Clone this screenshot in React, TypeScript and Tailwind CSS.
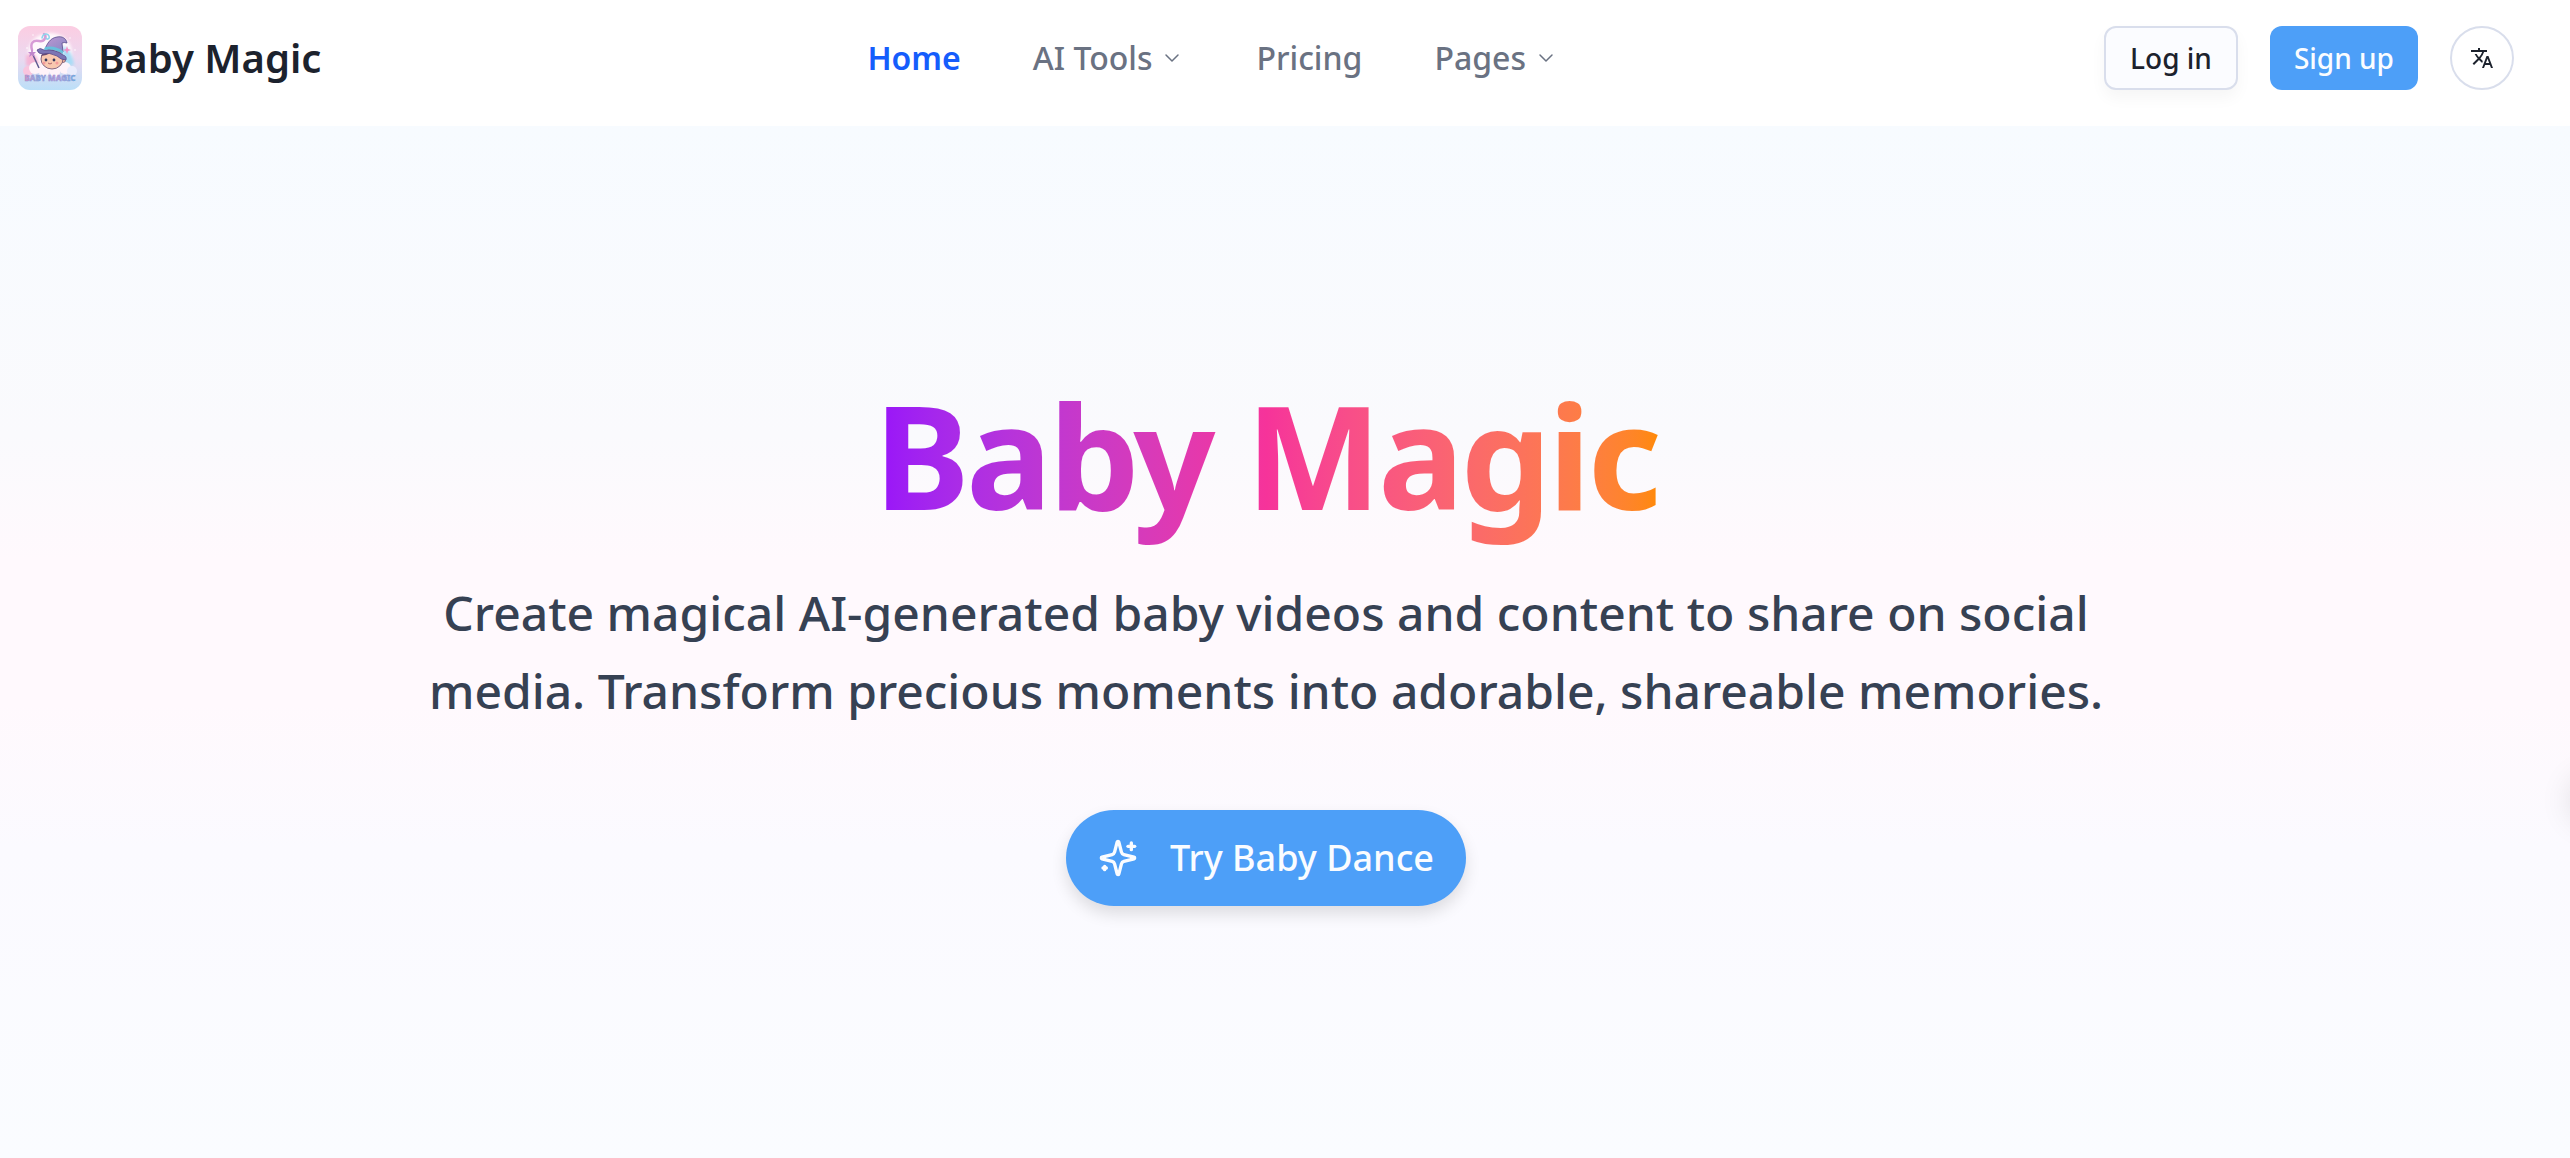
import { ChevronDown } from "lucide-react";
import { MdTranslate } from "react-icons/md";

const navItems = [
  { label: "Home", active: true },
  { label: "AI Tools", menu: true },
  { label: "Pricing" },
  { label: "Pages", menu: true },
];

const SparklesIcon = () => (
  <svg
    viewBox="0 0 24 24"
    fill="none"
    stroke="currentColor"
    strokeWidth="2"
    strokeLinecap="round"
    strokeLinejoin="round"
    className="size-10"
    aria-hidden="true"
  >
    <path d="M9.937 15.5A2 2 0 0 0 8.5 14.063l-6.135-1.582a.5.5 0 0 1 0-.962L8.5 9.936A2 2 0 0 0 9.937 8.5l1.582-6.135a.5.5 0 0 1 .963 0L14.063 8.5A2 2 0 0 0 15.5 9.937l6.135 1.581a.5.5 0 0 1 0 .964L15.5 14.063a2 2 0 0 0-1.437 1.437l-1.582 6.135a.5.5 0 0 1-.963 0z" />
    <path d="M20 3v4" />
    <path d="M22 5h-4" />
    <path d="M4 17v2" />
    <path d="M5 18H3" />
  </svg>
);

const Logo = () => (
  <svg viewBox="0 0 64 64" className="size-16 rounded-xl" aria-hidden="true">
    <defs>
      <linearGradient id="sky" x1="0" y1="0" x2="0" y2="1">
        <stop offset="0" stopColor="#fccde2" />
        <stop offset="0.5" stopColor="#ecd9f0" />
        <stop offset="1" stopColor="#bbdff8" />
      </linearGradient>
      <linearGradient id="hat" x1="0" y1="0" x2="1" y2="1">
        <stop offset="0" stopColor="#bf97d2" />
        <stop offset="1" stopColor="#8487c4" />
      </linearGradient>
      <linearGradient id="word" x1="0" y1="0" x2="1" y2="0">
        <stop offset="0" stopColor="#e48cc0" />
        <stop offset="0.3" stopColor="#86b4e4" />
        <stop offset="0.6" stopColor="#cf9ad8" />
        <stop offset="1" stopColor="#62bbe8" />
      </linearGradient>
      <filter id="soft">
        <feGaussianBlur stdDeviation="1.5" />
      </filter>
    </defs>
    <rect width="64" height="64" fill="url(#sky)" />
    {/* glow and clouds */}
    <ellipse cx="32" cy="27" rx="22" ry="20" fill="#fff8fc" filter="url(#soft)" />
    <path d="M44 20q10 3 12 19l-10 2z" fill="#a9dcf6" filter="url(#soft)" />
    <path d="M8 30q4-5 10 0l4 10H8z" fill="#f5b6d6" filter="url(#soft)" />
    <g fill="#fff3f9">
      <circle cx="10" cy="45" r="5" fill="#f9c5de" />
      <circle cx="17" cy="42" r="6" />
      <circle cx="26" cy="46" r="5" />
      <circle cx="37" cy="46" r="5" />
      <circle cx="47" cy="42" r="6" />
      <circle cx="54" cy="45" r="5" fill="#e9ecfc" />
    </g>
    {/* wand and its trail */}
    <path d="M14 24c-2-7 1-10 7-9s8-5 5-7" fill="none" stroke="#d79bd6" strokeWidth="2.5" strokeLinecap="round" />
    <path d="M24 12c1-5 6-5 7-2s-2 4-3 2" fill="none" stroke="#8ed4ec" strokeWidth="1.5" strokeLinecap="round" />
    <path d="M15 29l6 13" stroke="#605a91" strokeWidth="1.5" />
    <path d="M14 23l1 3 3 0-2 2 1 3-3-2-3 2 1-3-2-2 3 0z" fill="#c087cc" />
    {/* baby */}
    <circle cx="45" cy="34" r="2.5" fill="#f3b69f" stroke="#67486a" strokeWidth="0.7" />
    <ellipse cx="34" cy="33" rx="11" ry="10" fill="#f9c8af" stroke="#67486a" strokeWidth="0.8" />
    <path d="M23 30q3-6 10-6t11 6q-5-1-8-3-2 2-4 0-4 3-9 3z" fill="#67486a" />
    <circle cx="28" cy="34" r="1.4" fill="#34385d" />
    <circle cx="36" cy="34" r="1.4" fill="#34385d" />
    <circle cx="26" cy="37" r="1.5" fill="#f49a9a" />
    <circle cx="39" cy="37" r="1.5" fill="#f49a9a" />
    <path d="M30 37q2 2 4 0" fill="none" stroke="#9b4c5c" strokeWidth="0.8" />
    {/* hat */}
    <path d="M27 23c2-5 5-11 12-12 5-1 9 1 10 6q-3-1-5 0l1 9q-9-5-18-3z" fill="url(#hat)" stroke="#594b8b" strokeWidth="0.8" />
    <path d="M19 24q3-3 7 0 12-1 19 5 4 1 3 5-5 0-9-4-8-4-14-2-5 0-6-4z" fill="#7b75b4" stroke="#594b8b" strokeWidth="0.8" />
    <path d="M27 21q10-2 18 4v3q-9-6-19-4z" fill="#68c0dc" />
    <path d="M49 20l1 3 3 1-3 1-1 3-1-3-3-1 3-1z" fill="#f58ec4" />
    <g fill="#ffffff">
      <circle cx="9" cy="22" r="0.8" />
      <circle cx="57" cy="24" r="0.8" />
      <circle cx="52" cy="12" r="0.7" />
      <circle cx="15" cy="9" r="0.7" />
    </g>
    <text
      x="32"
      y="55"
      textAnchor="middle"
      fill="url(#word)"
      stroke="#8a8fd0"
      strokeWidth="0.4"
      className="font-['Noto_Sans',sans-serif] text-[8px] font-extrabold"
    >
      BABY MAGIC
    </text>
  </svg>
);

const Header = () => (
  <header className="bg-white">
    <div className="flex items-center justify-between pt-[26px] pr-14 pb-9 pl-[18px]">
      <a href="#" className="flex items-center gap-4 text-[40px] leading-16 font-semibold text-[#1c222d]">
        <Logo />
        Baby Magic
      </a>
      <nav className="flex items-center gap-[72px] text-[32px] leading-16 font-medium text-gray-500">
        {navItems.map((item) =>
          item.menu ? (
            <button key={item.label} type="button" className="flex items-center gap-2">
              {item.label}
              <ChevronDown className="size-6" strokeWidth={1.5} />
            </button>
          ) : (
            <a
              key={item.label}
              href="#"
              className={item.active ? "font-semibold text-[#155dfc]" : ""}
            >
              {item.label}
            </a>
          ),
        )}
      </nav>
      <div className="flex items-center gap-8 text-[28px] font-medium">
        <button
          type="button"
          className="h-16 rounded-xl border-2 border-[#d9deec] bg-[#fbfcff] px-6 text-[#1c222d] shadow-[0_8px_16px_rgba(0,0,0,0.04)]"
        >
          Log in
        </button>
        <button type="button" className="h-16 rounded-xl bg-[#4d9ff8] px-6 text-[#fafcff]">
          Sign up
        </button>
        <button
          type="button"
          aria-label="Change language"
          className="flex size-16 items-center justify-center rounded-full border-2 border-[#d9deec] text-[#1c222d]"
        >
          <MdTranslate className="size-6" />
        </button>
      </div>
    </div>
  </header>
);

const Hero = () => (
  <main className="flex grow flex-col items-center bg-[linear-gradient(to_bottom,#f7fbff,#fafafd_30%,#fff9fd_42%,#fff9fd_56%,#fbfaff_70%,#fafcff)] pt-[238px] pr-[38px] text-center">
    <h1 className="bg-linear-to-r from-[#9810fa] via-[#f6339a] to-[#ff8904] bg-clip-text pb-4 text-[144px] leading-[180px] font-bold tracking-tight text-transparent">
      Baby Magic
    </h1>
    <p className="mt-[14px] max-w-[1792px] text-5xl leading-[78px] font-medium text-[#364153]">
      Create magical AI-generated baby videos and content to share on social media. Transform
      precious moments into adorable, shareable memories.
    </p>
    <button
      type="button"
      className="mt-20 flex h-24 items-center gap-8 rounded-full bg-[#4d9ff8] px-8 text-4xl font-medium text-[#fafcff] shadow-[0_8px_16px_rgba(0,0,0,0.12)]"
    >
      <SparklesIcon />
      Try Baby Dance
    </button>
  </main>
);

export default function App() {
  return (
    <div className="flex min-h-screen flex-col font-['Noto_Sans',sans-serif]">
      <Header />
      <Hero />
      {/* side drawer handle, tucked away past the right edge */}
      <div className="fixed top-[67%] -right-12 size-12 rounded-full bg-white shadow-[0_0_32px_rgba(0,0,0,0.12)]" />
    </div>
  );
}
